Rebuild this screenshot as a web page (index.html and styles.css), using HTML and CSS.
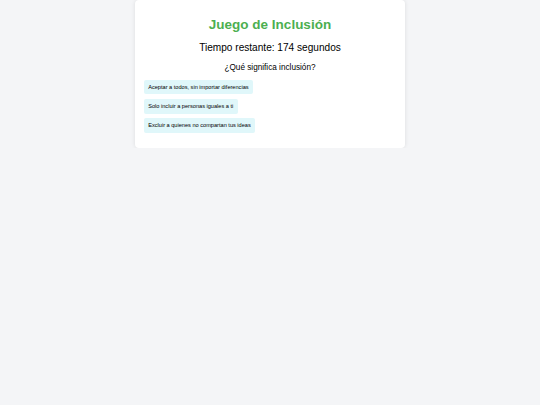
FILE: index.html
```html
<!DOCTYPE html>
<html lang="es">
<head>
<meta charset="utf-8">
<title>Juego de Inclusión</title>
<link rel="stylesheet" href="styles.css">
</head>
<body>
<div class="card">
  <h1 class="title">Juego de Inclusión</h1>
  <div class="timer">Tiempo restante: 174 segundos</div>
  <p class="question">¿Qué significa inclusión?</p>
  <div class="options">
    <button class="option">Aceptar a todos, sin importar diferencias</button>
    <button class="option">Solo incluir a personas iguales a ti</button>
    <button class="option">Excluir a quienes no compartan tus ideas</button>
  </div>
</div>
</body>
</html>
```

FILE: styles.css
```css
html, body {
  margin: 0;
  padding: 0;
}
body {
  background: #f4f5f7;
  font-family: "Liberation Sans", Arial, sans-serif;
  color: #000;
}
.card {
  width: 253px;
  margin: 0 auto;
  padding: 8.4px;
  background: #fff;
  border-radius: 4px;
  box-shadow: 0 0 4px rgba(0, 0, 0, 0.1);
}
.title {
  margin: 8.6px 0 9.4px;
  font-size: 13.5px;
  font-weight: bold;
  text-align: center;
  color: #4caf50;
  line-height: 15.5px;
}
.timer {
  font-size: 10.1px;
  line-height: 11.6px;
  text-align: center;
}
.question {
  margin: 9.2px 0 0;
  font-size: 8.2px;
  line-height: 9.4px;
  text-align: center;
}
.options {
  display: flex;
  flex-direction: column;
  align-items: flex-start;
  gap: 4.6px;
  margin: 7.6px 0 6.8px;
}
.option {
  font-family: "Liberation Sans", Arial, sans-serif;
  font-size: 5.62px;
  line-height: 6.5px;
  padding: 4.1px 4.7px;
  border: none;
  border-radius: 2px;
  background: #e0f7fa;
  color: #000;
}
```
